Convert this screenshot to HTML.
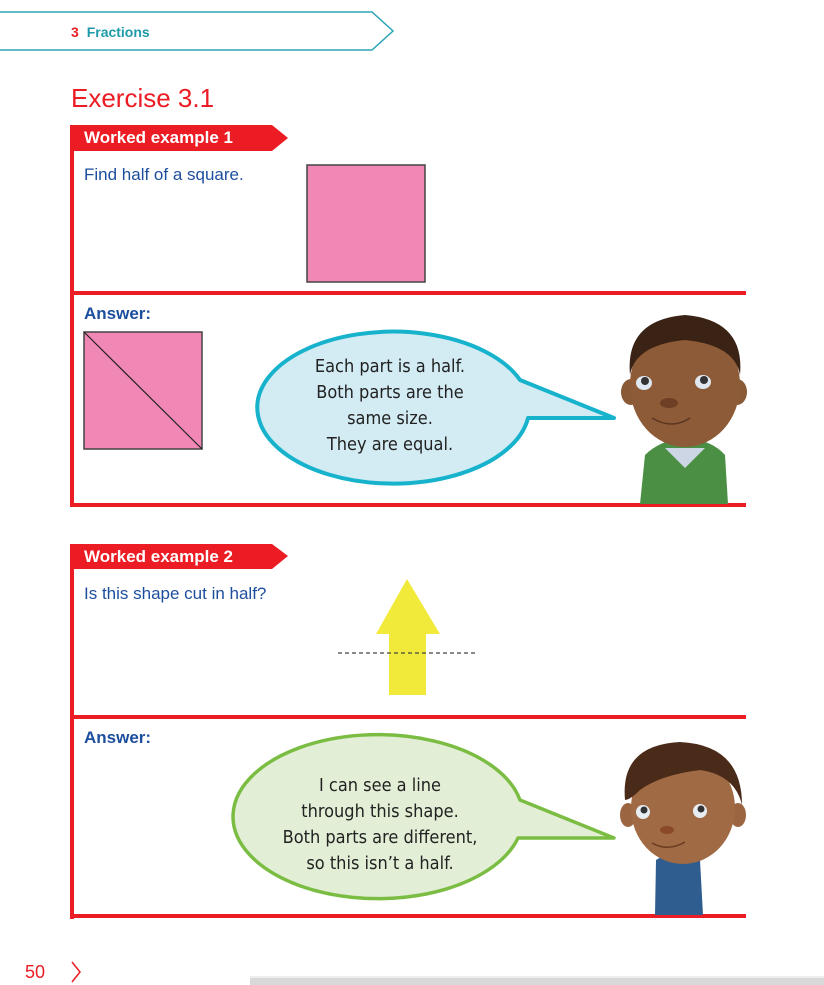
<!DOCTYPE html>
<html><head><meta charset="utf-8"><style>
body{margin:0;width:824px;height:985px;background:#fff;position:relative;overflow:hidden;font-family:"Liberation Sans",sans-serif}
.a{position:absolute}
.blue{color:#1d4e9e;font-size:17px}
.tab{color:#fff;font-weight:bold;font-size:17px}
.hand{font-family:"DejaVu Sans Condensed","Liberation Sans Narrow","Liberation Sans",sans-serif;font-size:18px;color:#222;text-align:center;line-height:26px}
</style></head><body>
<svg class="a" style="left:0;top:0" width="824" height="985">
<polyline points="0,12 372,12 393,31 372,50 0,50" fill="none" stroke="#2aa5b5" stroke-width="1.5"/>
<!-- box 1 -->
<polygon points="70,125 272,125 288,138 272,151 70,151" fill="#ec1c24"/>
<rect x="70" y="125" width="4" height="382" fill="#ec1c24"/>
<rect x="70" y="291" width="676" height="4" fill="#ec1c24"/>
<rect x="70" y="503" width="676" height="4" fill="#ec1c24"/>
<rect x="307" y="165" width="118" height="117" fill="#f087b4" stroke="#444" stroke-width="1.5"/>
<rect x="84" y="332" width="118" height="117" fill="#f087b4" stroke="#444" stroke-width="1.5"/>
<line x1="84" y1="332" x2="202" y2="449" stroke="#222" stroke-width="1.2"/>
<path d="M520,380 L614,418 L528,418 A136,76 0 1 1 520,380 Z" fill="#d3ecf4" stroke="#17b2cb" stroke-width="4" stroke-linejoin="round"/>
<!-- boy 1 -->
<path d="M640,504 L645,455 Q660,440 685,438 Q712,440 725,455 L728,504 Z" fill="#4b8f45"/>
<path d="M665,448 L685,468 L705,448 Z" fill="#cdd6e4"/>
<ellipse cx="631" cy="392" rx="10" ry="13" fill="#8a5a36"/>
<ellipse cx="737" cy="392" rx="10" ry="13" fill="#8a5a36"/>
<ellipse cx="685" cy="385" rx="55" ry="62" fill="#8d5b37"/>
<path d="M630,375 Q625,320 685,315 Q745,320 740,375 Q735,345 685,340 Q635,345 630,375Z" fill="#3a2314"/>
<ellipse cx="644" cy="383" rx="8" ry="7" fill="#dfe8f0"/><circle cx="645" cy="381" r="4" fill="#333"/>
<ellipse cx="703" cy="382" rx="8" ry="7" fill="#dfe8f0"/><circle cx="704" cy="380" r="4" fill="#333"/>
<ellipse cx="669" cy="403" rx="9" ry="5" fill="#6e3e25"/>
<path d="M652,418 Q672,430 690,418" fill="none" stroke="#5a3520" stroke-width="1.5"/>
<!-- box 2 -->
<polygon points="70,544 272,544 288,556 272,569 70,569" fill="#ec1c24"/>
<rect x="70" y="544" width="4" height="375" fill="#ec1c24"/>
<rect x="70" y="715" width="676" height="4" fill="#ec1c24"/>
<rect x="70" y="914" width="676" height="4" fill="#ec1c24"/>
<polygon points="407,579 440,634 426,634 426,695 389,695 389,634 376,634" fill="#f2ea3a"/>
<line x1="338" y1="653" x2="478" y2="653" stroke="#444" stroke-width="1.2" stroke-dasharray="4,3"/>
<path d="M520,800 L614,838 L518,838 A145,82 0 1 1 520,800 Z" fill="#e2efd6" stroke="#7bbd43" stroke-width="3.5" stroke-linejoin="round"/>
<!-- boy 2 -->
<path d="M655,915 L656,860 Q680,845 700,860 L703,915 Z" fill="#2f5d8f"/>
<ellipse cx="628" cy="815" rx="8" ry="12" fill="#9a6540"/>
<ellipse cx="738" cy="815" rx="8" ry="12" fill="#9a6540"/>
<ellipse cx="683" cy="808" rx="52" ry="56" fill="#a06a44"/>
<path d="M625,800 Q620,745 680,742 Q742,745 742,805 Q735,775 700,770 Q660,775 640,790 Q630,800 625,800Z" fill="#4a2a18"/>
<ellipse cx="643" cy="812" rx="7" ry="7" fill="#e6edf3"/><circle cx="644" cy="810" r="3.5" fill="#333"/>
<ellipse cx="700" cy="811" rx="7" ry="7" fill="#e6edf3"/><circle cx="701" cy="809" r="3.5" fill="#333"/>
<ellipse cx="667" cy="830" rx="7" ry="4" fill="#8a4a2a"/>
<path d="M652,843 Q668,852 685,842" fill="none" stroke="#6a3a20" stroke-width="1.5"/>
<!-- footer -->
<polyline points="72,962 80,972 72,982" fill="none" stroke="#ec1c24" stroke-width="1.5"/>
<rect x="250" y="978" width="574" height="7" fill="#d8d8d8"/>
<rect x="250" y="976" width="574" height="2" fill="#eee"/>
</svg>
<div class="a" style="left:71px;top:24px;font-size:14px;font-weight:bold;color:#ec1c24">3 <span style="color:#1e9aaa;margin-left:4px">Fractions</span></div>
<div class="a" style="left:71px;top:83px;font-size:26px;color:#ec1c24">Exercise 3.1</div>
<div class="a tab" style="left:84px;top:128px">Worked example 1</div>
<div class="a blue" style="left:84px;top:165px">Find half of a square.</div>
<div class="a blue" style="left:84px;top:304px;font-weight:bold">Answer:</div>
<div class="a hand" style="left:270px;top:354px;width:240px">Each part is a half.<br>Both parts are the<br>same size.<br>They are equal.</div>
<div class="a tab" style="left:84px;top:547px">Worked example 2</div>
<div class="a blue" style="left:84px;top:584px">Is this shape cut in half?</div>
<div class="a blue" style="left:84px;top:728px;font-weight:bold">Answer:</div>
<div class="a hand" style="left:250px;top:773px;width:260px">I can see a line<br>through this shape.<br>Both parts are different,<br>so this isn’t a half.</div>
<div class="a" style="left:25px;top:962px;font-size:18px;color:#ec1c24">50</div>
</body></html>
